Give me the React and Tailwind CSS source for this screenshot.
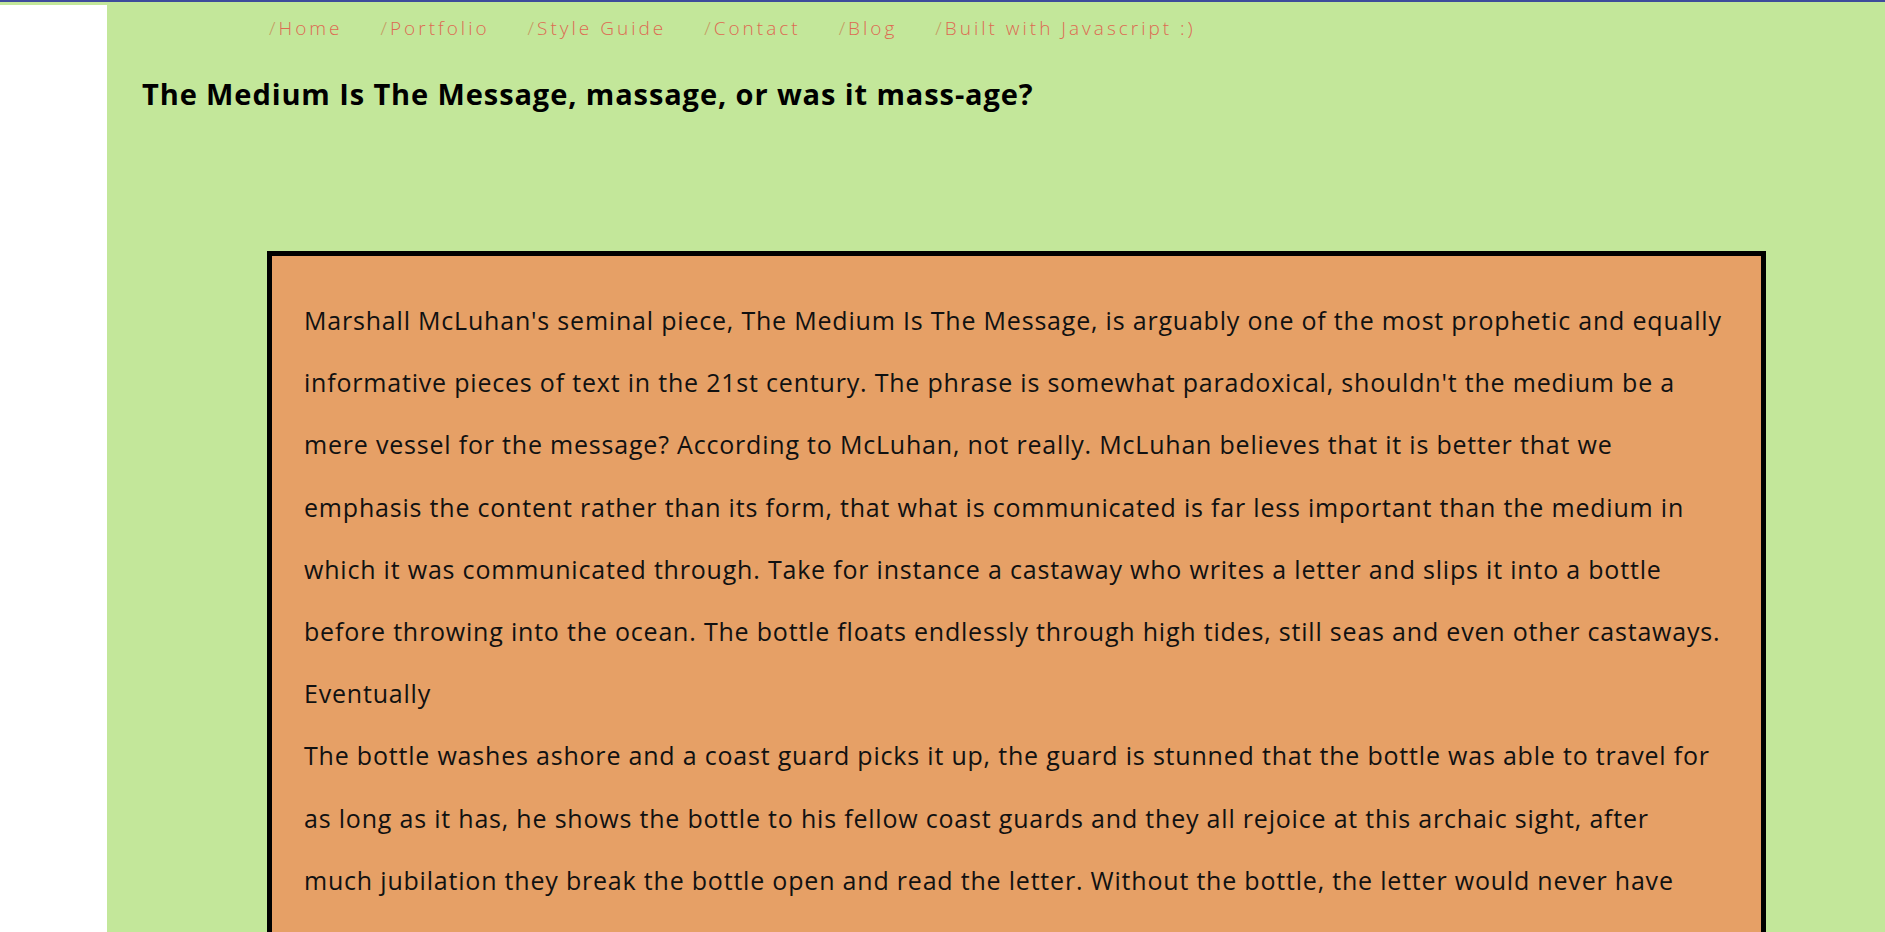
import React from 'react';

const links = ['Home', 'Portfolio', 'Style Guide', 'Contact', 'Blog', 'Built with Javascript :)'];

const lines = [
  "Marshall McLuhan's seminal piece, The Medium Is The Message, is arguably one of the most prophetic and equally",
  "informative pieces of text in the 21st century. The phrase is somewhat paradoxical, shouldn't the medium be a",
  'mere vessel for the message? According to McLuhan, not really. McLuhan believes that it is better that we',
  'emphasis the content rather than its form, that what is communicated is far less important than the medium in',
  'which it was communicated through. Take for instance a castaway who writes a letter and slips it into a bottle',
  'before throwing into the ocean. The bottle floats endlessly through high tides, still seas and even other castaways.',
  'Eventually',
  'The bottle washes ashore and a coast guard picks it up, the guard is stunned that the bottle was able to travel for',
  'as long as it has, he shows the bottle to his fellow coast guards and they all rejoice at this archaic sight, after',
  'much jubilation they break the bottle open and read the letter. Without the bottle, the letter would never have',
];

export default function App() {
  return (
    <div className="min-h-screen bg-white font-['Open_Sans',sans-serif]">
      <div className="h-[2px] bg-[#3e4b9c]" />
      <div className="h-[3px] bg-[#c3e79a]" />
      <div className="flex">
        <div className="w-[107px] shrink-0 bg-white" />
        <main className="flex-1 bg-[#c3e79a] pb-16">
          <nav className="flex gap-[38px] pl-[162px] pt-[9px] text-[19px] font-light leading-[28px] tracking-[3px]">
            {links.map((l) => (
              <a key={l} href="#" className="text-[#de6a52]">
                <span className="text-[#c59a62]">/</span>
                {l}
              </a>
            ))}
          </nav>
          <h1 className="mt-[34px] pl-[35px] text-[29px] font-bold leading-[36px] tracking-[0.9px] text-black">
            The Medium Is The Message, massage, or was it mass-age?
          </h1>
          <section className="mt-[139px] ml-[160px] mr-[119px] border-[5px] border-black bg-[#e6a066] px-[32px] pt-[33px] pb-16">
            <p className="text-[25px] leading-[62.2px] tracking-[0.8px] text-[#111]">
              {lines.map((t, i) => (
                <span key={i} className="block whitespace-nowrap">
                  {t}
                </span>
              ))}
            </p>
          </section>
        </main>
      </div>
    </div>
  );
}
